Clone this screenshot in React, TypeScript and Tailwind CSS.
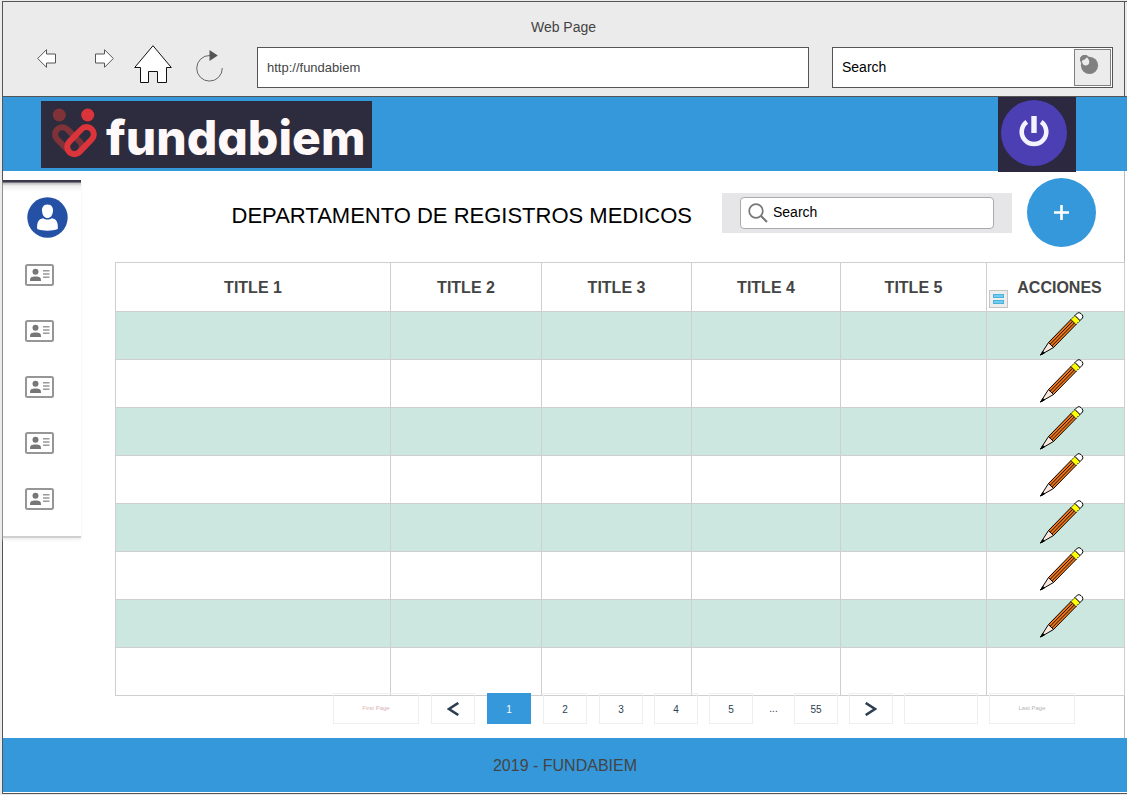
import React from "react";

const columns = ["TITLE 1", "TITLE 2", "TITLE 3", "TITLE 4", "TITLE 5"];
const rows = [0, 1, 2, 3, 4, 5, 6, 7];
const editable = rows.slice(0, 7);

function ArrowIcon({ flip }: { flip?: boolean }) {
  return (
    <svg width="20" height="20" viewBox="0 0 20 20" className={flip ? "-scale-x-100" : ""} aria-hidden="true">
      <path d="M0.7 9.5 L9.5 0.7 V5 H18.5 V14 H9.5 V18.3 Z" fill="#fff" stroke="#555" />
    </svg>
  );
}

function HomeIcon() {
  return (
    <svg width="38" height="39" viewBox="0 0 38 39" aria-hidden="true">
      <path
        d="M19 0.7 L37.3 22.5 H32.5 V37.5 H23.5 V26.5 H14.5 V37.5 H6.5 V22.5 H0.7 Z"
        fill="#fff"
        stroke="#111"
      />
    </svg>
  );
}

function RefreshIcon() {
  return (
    <svg width="27" height="32" viewBox="0 0 27 32" aria-hidden="true">
      <path d="M14 5.5 A12.8 12.8 0 1 0 26.3 18" fill="none" stroke="#666" />
      <path d="M13.5 0 L21.8 5.5 L13.5 11 Z" fill="#555" />
    </svg>
  );
}

function LensIcon() {
  return (
    <svg width="19" height="20" viewBox="0 0 19 20" aria-hidden="true">
      <circle cx="9.5" cy="10.3" r="8.6" fill="#808080" />
      <circle cx="5" cy="5" r="4.8" fill="#808080" />
      <ellipse cx="5.5" cy="6.2" rx="3.6" ry="4.2" transform="rotate(-20 5.5 6.2)" fill="#ececec" />
      <path d="M0.6 6.5 A4.6 4.6 0 0 1 8 1.2 L5 4.2 Z" fill="#808080" />
    </svg>
  );
}

function LogoMark() {
  return (
    <svg width="47" height="50" viewBox="0 0 47 50" aria-hidden="true">
      <circle cx="8.3" cy="7" r="6.5" fill="#803239" />
      <circle cx="36.7" cy="7" r="6.5" fill="#dc343b" />
      <g fill="none" strokeWidth="6">
        <rect x="1.5" y="25.4" width="32" height="14.4" rx="7.2" transform="rotate(45 17.5 32.6)" stroke="#803239" />
        <rect x="13.5" y="25.4" width="32" height="14.4" rx="7.2" transform="rotate(-46 29.5 32.6)" stroke="#dc343b" />
      </g>
    </svg>
  );
}

function PowerIcon() {
  return (
    <svg width="32" height="32" viewBox="0 0 32 32" fill="none" stroke="#f4f2ff" aria-hidden="true">
      <path d="M8.8 6.8 A12.3 12.3 0 1 0 23.2 6.8" strokeWidth="4.6" />
      <path d="M16 1 V18" strokeWidth="5.4" />
    </svg>
  );
}

function AvatarIcon() {
  return (
    <svg width="41" height="41" viewBox="0 0 41 41" aria-hidden="true">
      <circle cx="20.5" cy="20.5" r="20.2" fill="#2450a5" />
      <path d="M20.5 7.5 C25 7.5 26.3 11 26 14 C25.6 18.5 23.5 21 20.5 21 C17.5 21 15.4 18.5 15 14 C14.7 11 16 7.5 20.5 7.5 Z" fill="#fff" />
      <path d="M10.2 32 C9.7 25.5 11.5 22 16 21.3 C18.5 23 22.5 23 25 21.3 C29.5 22 31.3 25.5 30.8 32 C25 34.3 16 34.3 10.2 32 Z" fill="#fff" />
    </svg>
  );
}

function CardIcon() {
  return (
    <svg width="29" height="22" viewBox="0 0 29 22" aria-hidden="true">
      <rect x="1" y="1" width="27" height="20" rx="1.5" fill="#fff" stroke="#969696" strokeWidth="2" />
      <circle cx="10.5" cy="7.7" r="3" fill="#777" />
      <path d="M5 17 C5 13.2 6.5 12.6 10.5 12.6 C14.5 12.6 16 13.2 16 17 Z" fill="#777" />
      <path d="M18 6.8 H24.5 M18 10 H24.5 M18 13.2 H24.5" stroke="#999" strokeWidth="1.6" />
    </svg>
  );
}

function PencilIcon() {
  return (
    <svg width="44" height="44" viewBox="0 0 44 44" aria-hidden="true">
      <path d="M0.5 43 L8.5 30.5 L13.5 35.5 Z" fill="#fde8dc" stroke="#000" />
      <path d="M0.5 43 L3 39.5 L4.5 41 Z" fill="#000" stroke="#000" />
      <path d="M8.5 30.5 L31 7.5 L36 12.5 L13.5 35.5 Z" fill="#f07818" stroke="#000" />
      <path d="M10.2 32.2 L32.7 9.2 M11.9 33.9 L34.4 10.9" stroke="#000" strokeWidth="0.9" />
      <path d="M31 7.5 L35 3.5 L40 8.5 L36 12.5 Z" fill="#ff0" stroke="#000" strokeDasharray="1.5 1" />
      <path d="M35 3.5 L37.5 1 Q39 0 41 1.6 L42 2.6 Q43.5 4.5 42.5 6 L40 8.5 Z" fill="#fff" stroke="#000" />
    </svg>
  );
}

function Chevron({ flip }: { flip?: boolean }) {
  return (
    <svg width="12" height="14" viewBox="0 0 12 14" className={flip ? "-scale-x-100" : ""} aria-hidden="true">
      <path d="M11.3 1 L2 7 L11.3 13" fill="none" stroke="#2c3e50" strokeWidth="2.6" />
    </svg>
  );
}

const pageBox = "flex h-[31px] w-11 items-center justify-center border border-[#eeeeee] pt-px text-[10px] text-[#2c3e50]";
const wideBox = "flex h-[31px] w-[86px] items-center justify-center border border-[#eeeeee] text-[6px]";

function BrowserBar() {
  return (
    <div className="border-b border-[#555] bg-[#ebebeb]">
      <div className="mr-[2px] border-r border-[#555] pt-4 pb-2">
        <div className="text-center text-[14px] leading-[19px] text-[#444]">Web Page</div>
        <div className="mt-[10px] flex pr-[11px]">
          <div className="flex w-[254px] shrink-0 items-start pl-[34px]">
            <button type="button" aria-label="Back" className="mt-[2px]"><ArrowIcon /></button>
            <button type="button" aria-label="Forward" className="mt-[2px] ml-[37px]"><ArrowIcon flip /></button>
            <button type="button" aria-label="Home" className="-mt-[2px] ml-5"><HomeIcon /></button>
            <button type="button" aria-label="Reload" className="mt-[3px] ml-6"><RefreshIcon /></button>
          </div>
          <input
            aria-label="Address"
            defaultValue="http://fundabiem"
            className="h-[41px] min-w-0 flex-1 border border-[#555] bg-white px-[9px] text-[13px] text-[#444]"
          />
          <div className="ml-[23px] flex h-[41px] w-[281px] shrink-0 border border-[#555] bg-white p-px">
            <input aria-label="Web search" defaultValue="Search" className="min-w-0 flex-1 px-2 text-[14px] text-black" />
            <button type="button" aria-label="Search the web" className="flex w-[37px] items-start border border-[#808080] bg-[#ececec] pt-[5px] pl-[5px]">
              <LensIcon />
            </button>
          </div>
        </div>
      </div>
    </div>
  );
}

function Sidebar() {
  return (
    <nav className="mt-[9px] flex w-[78px] shrink-0 flex-col items-start gap-[34px] self-start border-b-2 border-[#cfcfcf] bg-[linear-gradient(to_bottom,#3a384c_0px,#3a384c_2px,#bbb_3px,#f0f0f0_6px,#fff_12px)] pt-[17px] pb-[26px] pl-[22px] shadow-[0_2px_3px_#eeeeee]">
      <a href="#profile" aria-label="Profile" className="-mb-2 ml-[2px]"><AvatarIcon /></a>
      {[1, 2, 3, 4, 5].map((n) => (
        <a key={n} href={"#records-" + n} aria-label={"Records " + n}><CardIcon /></a>
      ))}
    </nav>
  );
}

function RecordsTable() {
  return (
    <div className="relative -mr-px mt-[15px]">
      <table className="w-full table-fixed border-collapse">
        <colgroup>
          <col />
          <col className="w-[151px]" />
          <col className="w-[150px]" />
          <col className="w-[149px]" />
          <col className="w-[146px]" />
          <col className="w-[138px]" />
        </colgroup>
        <thead>
          <tr className="h-[49px]">
            {columns.map((c) => (
              <th key={c} className="border border-[#cfcfcf] pt-[2px] text-[16px] font-bold text-[#444]">{c}</th>
            ))}
            <th className="relative border border-[#cfcfcf] pt-[2px] pl-2 text-[16px] font-bold text-[#444]">
              ACCIONES
              <button type="button" aria-label="Column menu" className="absolute bottom-[3px] left-[2px] flex h-[18px] w-[19px] flex-col items-center justify-center gap-[2px] border border-[#c4c4c4] bg-[#ededed]">
                <span className="h-1 w-[11px] border border-[#4db1dc] bg-[#6fcdf0]" />
                <span className="h-1 w-[11px] border border-[#4db1dc] bg-[#6fcdf0]" />
              </button>
            </th>
          </tr>
        </thead>
        <tbody>
          {rows.map((r) => (
            <tr key={r} className="h-12 odd:bg-[#cce7df]">
              {[0, 1, 2, 3, 4, 5].map((c) => (
                <td key={c} className="border border-[#cfcfcf]" />
              ))}
            </tr>
          ))}
        </tbody>
      </table>
      <div className="absolute top-[50px] right-[41px] flex flex-col gap-[3px]">
        {editable.map((r) => (
          <button key={r} type="button" aria-label={"Edit row " + (r + 1)}><PencilIcon /></button>
        ))}
      </div>
    </div>
  );
}

function Pagination() {
  return (
    <nav aria-label="Pages" className="relative -mt-[3px] flex items-center justify-end gap-3 pr-[49px]">
      <button type="button" className={wideBox + " text-[#d9b3b3]"}>First Page</button>
      <button type="button" aria-label="Previous page" className={pageBox}><Chevron /></button>
      <button type="button" aria-current="page" className="flex h-[31px] w-11 items-center justify-center bg-[#3498db] pt-px text-[10px] text-white">1</button>
      <button type="button" className={pageBox}>2</button>
      <div className="flex items-center gap-[11px]">
        <button type="button" className={pageBox}>3</button>
        <button type="button" className={pageBox}>4</button>
        <button type="button" className={pageBox}>5</button>
        <span className="w-[19px] text-center text-[10px] text-[#2c3e50]">...</span>
        <button type="button" className={pageBox}>55</button>
        <button type="button" aria-label="Next page" className={pageBox}><Chevron flip /></button>
        <input aria-label="Go to page" className="h-[31px] w-[74px] border border-[#eeeeee] px-2 text-[10px]" />
        <button type="button" className={wideBox + " text-[#b5b5b5]"}>Last Page</button>
      </div>
    </nav>
  );
}

export default function App() {
  return (
    <div className="min-h-screen bg-[#ebebeb] pt-px pl-[2px] font-['Liberation_Sans',Arial,sans-serif]">
      <div className="border-t border-b border-l border-[#555] bg-white pb-px">
        <BrowserBar />
        <header className="flex h-[74px] items-start justify-between bg-[#3498db] pr-[51px] pl-[38px]">
          <div className="mt-1 flex h-[67px] w-[331px] items-start bg-[#2c2c3e] pt-[7px] pl-[10px]">
            <LogoMark />
            <span className="ml-2 text-[48px] leading-[60px] font-extrabold text-[#fff8f8] font-['Inter',sans-serif] [font-feature-settings:'cv11','ss03']">fundabiem</span>
          </div>
          <button type="button" aria-label="Log out" className="flex h-[75px] w-[78px] items-start bg-[#2b2840] pt-[3px] pl-[3px]">
            <span className="flex size-[66px] items-center justify-center rounded-full bg-[#4c3fb4] pb-[5px]"><PowerIcon /></span>
          </button>
        </header>
        <main className="mr-[2px] flex border-r border-[#bbb]">
          <Sidebar />
          <div className="ml-[34px] min-w-0 flex-1 pt-[7px] pb-[14px]">
            <div className="flex items-center justify-end pr-7">
              <h1 className="pt-[7px] text-[22px] leading-7 whitespace-nowrap text-black">DEPARTAMENTO DE REGISTROS MEDICOS</h1>
              <div className="ml-[30px] h-10 w-[290px] bg-[#e6e6e8] px-[18px] py-1">
                <label className="flex h-8 items-center rounded-[4px] border border-[#aaa] bg-white pl-[7px]">
                  <svg width="20" height="20" viewBox="0 0 20 20" fill="none" stroke="#777" className="shrink-0" aria-hidden="true">
                    <circle cx="8" cy="8" r="6.8" strokeWidth="1.7" />
                    <path d="M13 13 L19 19" strokeWidth="2.2" />
                  </svg>
                  <input aria-label="Search records" defaultValue="Search" className="ml-[5px] w-full min-w-0 text-[14px] text-black" />
                </label>
              </div>
              <button type="button" aria-label="Add record" className="ml-[15px] flex size-[69px] shrink-0 items-center justify-center rounded-full bg-[#3498db]">
                <svg width="15" height="15" viewBox="0 0 15 15" stroke="#fff" strokeWidth="2.6" aria-hidden="true">
                  <path d="M7.5 0 V15 M0 7.5 H15" />
                </svg>
              </button>
            </div>
            <RecordsTable />
            <Pagination />
          </div>
        </main>
        <footer className="bg-[#3498db] pt-4 pb-[14px] text-center text-[16px] leading-6 text-[#444]">2019 - FUNDABIEM</footer>
      </div>
    </div>
  );
}
